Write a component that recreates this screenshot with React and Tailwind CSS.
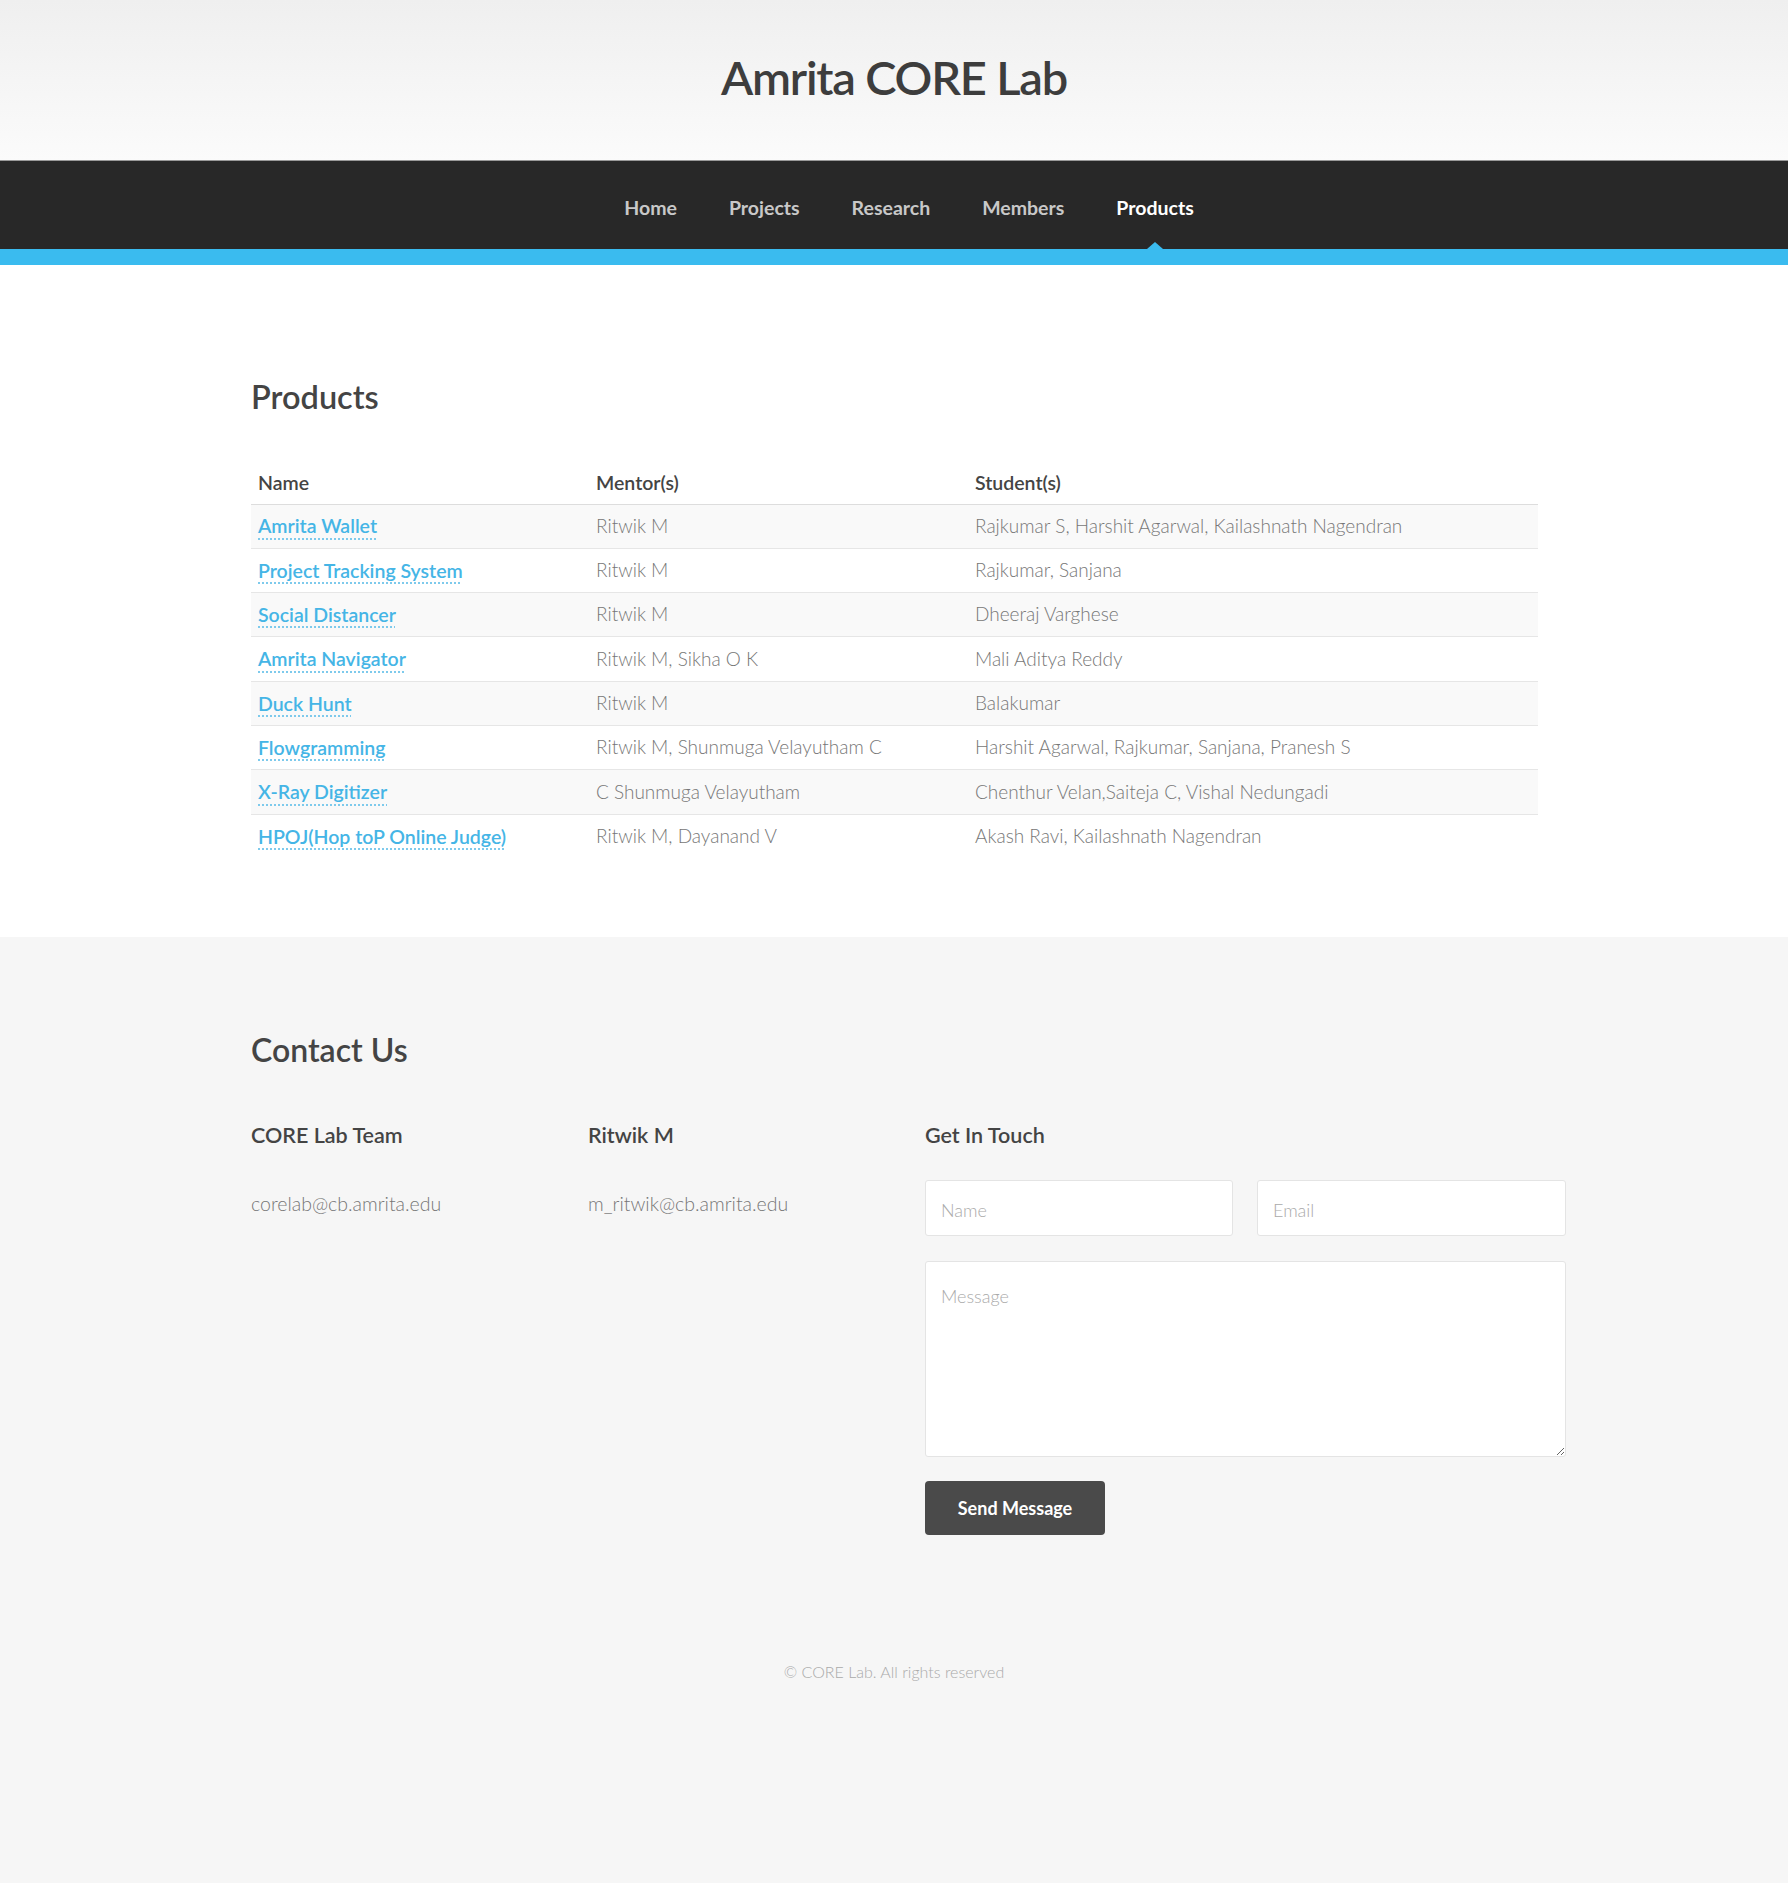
import React from 'react';

const navItems = ['Home', 'Projects', 'Research', 'Members', 'Products'];

const products = [
  { name: 'Amrita Wallet', mentors: 'Ritwik M', students: 'Rajkumar S, Harshit Agarwal, Kailashnath Nagendran' },
  { name: 'Project Tracking System', mentors: 'Ritwik M', students: 'Rajkumar, Sanjana' },
  { name: 'Social Distancer', mentors: 'Ritwik M', students: 'Dheeraj Varghese' },
  { name: 'Amrita Navigator', mentors: 'Ritwik M, Sikha O K', students: 'Mali Aditya Reddy' },
  { name: 'Duck Hunt', mentors: 'Ritwik M', students: 'Balakumar' },
  { name: 'Flowgramming', mentors: 'Ritwik M, Shunmuga Velayutham C', students: 'Harshit Agarwal, Rajkumar, Sanjana, Pranesh S' },
  { name: 'X-Ray Digitizer', mentors: 'C Shunmuga Velayutham', students: 'Chenthur Velan,Saiteja C, Vishal Nedungadi' },
  { name: 'HPOJ(Hop toP Online Judge)', mentors: 'Ritwik M, Dayanand V', students: 'Akash Ravi, Kailashnath Nagendran' },
];

export default function App() {
  return (
    <div className="min-h-[1883px] bg-[#f6f6f6] font-['Lato','Liberation_Sans',sans-serif] text-[#777]">
      {/* header */}
      <header className="h-[160px] bg-gradient-to-b from-[#efefef] to-[#fbfbfb] flex items-center justify-center pb-[6px]">
        <h1 className="text-[47px] font-semibold text-[#3d3d3d] tracking-[-1.2px]">Amrita CORE Lab</h1>
      </header>

      {/* nav */}
      <nav className="h-[89px] bg-[#282828] border-t border-[#9a9a9a]">
        <ul className="h-full flex justify-center gap-[52px] pl-[30px]">
          {navItems.map((item) => (
            <li key={item} className={`relative h-full flex items-center pt-[6px] text-[19.5px] font-bold ${item === 'Products' ? 'text-white' : 'text-[#c8c8c8]'}`}>
              {item}
              {item === 'Products' && (
                <span className="absolute left-1/2 -translate-x-1/2 bottom-0 w-0 h-0 border-l-[8px] border-r-[8px] border-b-[7px] border-l-transparent border-r-transparent border-b-[#3abbef]" />
              )}
            </li>
          ))}
        </ul>
      </nav>
      <div className="h-[16px] bg-[#3abbef]" />

      {/* products */}
      <section className="bg-white pt-[112px] pb-[79px]">
        <div className="ml-[251px] w-[1315px]">
          <h2 className="text-[32.5px] leading-[40px] font-semibold text-[#444]">Products</h2>
          <table className="mt-[44px] w-[1287px] border-collapse text-left text-[19px]">
            <thead>
              <tr className="border-b border-[#dddddd]">
                <th className="w-[338px] h-[43px] px-[7px] text-[19.5px] font-semibold text-[#444]">Name</th>
                <th className="w-[379px] h-[43px] px-[7px] text-[19.5px] font-semibold text-[#444]">Mentor(s)</th>
                <th className="h-[43px] px-[7px] text-[19.5px] font-semibold text-[#444]">Student(s)</th>
              </tr>
            </thead>
            <tbody>
              {products.map((p, i) => (
                <tr key={p.name} className={`border-t border-[#e6e6e6] ${i % 2 === 0 ? 'bg-[#f9f9f9]' : 'bg-white'}`}>
                  <td className="h-[44.3px] px-[7px]">
                    <a href="#" className="text-[19.5px] font-semibold text-[#45b5e6] underline decoration-dotted decoration-[#7cc9ec] underline-offset-[5px]">
                      {p.name}
                    </a>
                  </td>
                  <td className="h-[44.3px] px-[7px] font-light">{p.mentors}</td>
                  <td className="h-[44.3px] px-[7px] font-light">{p.students}</td>
                </tr>
              ))}
            </tbody>
          </table>
        </div>
      </section>

      {/* contact */}
      <section className="pt-[93px]">
        <div className="ml-[251px] w-[1315px]">
          <h2 className="text-[32px] leading-[40px] font-semibold text-[#444]">Contact Us</h2>
          <div className="mt-[50px] grid grid-cols-4 gap-x-[33px]">
            <div>
              <h3 className="text-[21.5px] leading-[30px] font-semibold text-[#444]">CORE Lab Team</h3>
              <p className="mt-[41px] text-[19.5px] leading-[26px] font-light">corelab@cb.amrita.edu</p>
            </div>
            <div>
              <h3 className="text-[21.5px] leading-[30px] font-semibold text-[#444]">Ritwik M</h3>
              <p className="mt-[41px] text-[19.5px] leading-[26px] font-light">m_ritwik@cb.amrita.edu</p>
            </div>
            <div className="col-span-2">
              <h3 className="text-[21.5px] leading-[30px] font-semibold text-[#444]">Get In Touch</h3>
              <form className="mt-[30px]" onSubmit={(e) => e.preventDefault()}>
                <div className="flex gap-[24px]">
                  <input type="text" placeholder="Name" className="w-[308px] h-[56px] px-[15px] pt-[4px] bg-white border border-[#e4e4e4] rounded-[3px] text-[18px] font-light placeholder:text-[#aaa] outline-none" />
                  <input type="email" placeholder="Email" className="w-[309px] h-[56px] px-[15px] pt-[4px] bg-white border border-[#e4e4e4] rounded-[3px] text-[18px] font-light placeholder:text-[#aaa] outline-none" />
                </div>
                <textarea placeholder="Message" className="block mt-[25px] w-[641px] h-[196px] px-[15px] py-[22px] bg-white border border-[#e4e4e4] rounded-[3px] text-[18px] leading-[24px] font-light placeholder:text-[#aaa] outline-none" />
                <button type="submit" className="mt-[24px] w-[180px] h-[54px] bg-[#4a4a4a] rounded-[4px] text-white text-[18px] font-bold">
                  Send Message
                </button>
              </form>
            </div>
          </div>
        </div>
        <footer className="mt-[125px] text-center text-[16px] leading-[24px] font-light text-[#aaa]">
          © CORE Lab. All rights reserved
        </footer>
      </section>
    </div>
  );
}
